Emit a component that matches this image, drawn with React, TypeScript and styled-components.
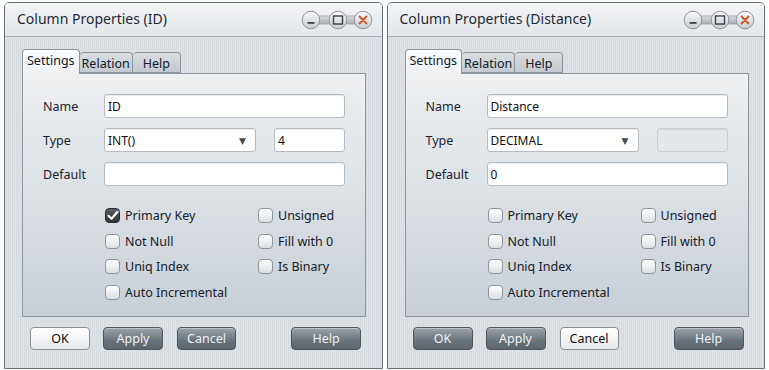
import React from "react";
import styled, { createGlobalStyle } from "styled-components";

const Global = createGlobalStyle`
  html, body { margin: 0; padding: 0; background: #ffffff; }
  body { font-family: "Noto Sans", "Open Sans", "DejaVu Sans", sans-serif; }
  * { box-sizing: border-box; }
`;

const Page = styled.div`
  display: flex;
  gap: 4px;
  padding: 2px 4px 0 4px;
`;

const Win = styled.div`
  width: 379px;
  height: 367px;
  border: 1px solid #66707b;
  border-radius: 5px 5px 0 0;
  display: flex;
  flex-direction: column;
  background: repeating-linear-gradient(90deg, #dfe3e7 0px, #dfe3e7 1px, #d5dadf 1px, #d5dadf 2px);
  overflow: hidden;
`;

const TitleBar = styled.div`
  height: 34px;
  flex: none;
  display: flex;
  align-items: center;
  justify-content: space-between;
  padding: 0 9px 0 12px;
  background: linear-gradient(#f3f5f7, #e2e6ea);
  border-bottom: 1px solid #a7aeb6;
`;

const Title = styled.div`
  font-size: 14px;
  color: #1e2a36;
  padding-bottom: 2px;
`;

const Body = styled.div`
  padding: 12px 16px 0 17px;
  display: flex;
  flex-direction: column;
`;

const TabRow = styled.div`
  display: flex;
  align-items: flex-end;
  height: 24px;
  position: relative;
  z-index: 1;
`;

const Tab = styled.div<{ $active?: boolean; $px: number }>`
  height: ${(p) => (p.$active ? "25px" : "21px")};
  margin-bottom: ${(p) => (p.$active ? "-1px" : "0")};
  padding: 2px ${(p) => p.$px}px 0 ${(p) => p.$px}px;
  border: 1px solid #8d959e;
  border-bottom: ${(p) => (p.$active ? "none" : "1px solid #8d959e")};
  border-left: ${(p) => (p.$active ? "1px solid #8d959e" : "none")};
  border-radius: 4px 4px 0 0;
  background: ${(p) =>
    p.$active ? "linear-gradient(#fbfcfd, #eef0f2)" : "linear-gradient(#d9dde1, #c3c9cf)"};
  font-size: 12.5px;
  color: #14202c;
  line-height: 17px;
`;

const Panel = styled.div`
  width: 344px;
  height: 244px;
  border: 1px solid #8d959e;
  background: linear-gradient(#eef0f2 0%, #dde2e6 45%, #c8cfd7 100%);
  padding: 20px 20px 0 20px;
  display: flex;
  flex-direction: column;
`;

const FieldRow = styled.div`
  display: flex;
  align-items: center;
  height: 24px;
  margin-bottom: 10px;
`;

const Label = styled.div`
  width: 61px;
  font-size: 12.5px;
  color: #1a2430;
`;

const Input = styled.div<{ $w: number; $disabled?: boolean }>`
  width: ${(p) => p.$w}px;
  height: 24px;
  border: 1px solid ${(p) => (p.$disabled ? "#c9ced3" : "#b4bbc3")};
  border-radius: 3px;
  background: ${(p) => (p.$disabled ? "#e4e7ea" : "#ffffff")};
  box-shadow: inset 0 1px 1px rgba(0, 0, 0, 0.08);
  font-size: 12px;
  color: #101010;
  padding: 0 0 0 3px;
  display: flex;
  align-items: center;
  justify-content: space-between;
`;

const Arrow = styled.span`
  font-size: 9px;
  color: #444b52;
  margin-right: 9px;
`;

const Spacer = styled.div<{ $w: number }>`
  width: ${(p) => p.$w}px;
`;

const Checks = styled.div`
  display: grid;
  grid-template-columns: 153px 100px;
  grid-auto-rows: 25.5px;
  margin-left: 62px;
  margin-top: 7px;
`;

const CheckItem = styled.div`
  display: flex;
  align-items: center;
  gap: 5px;
  font-size: 12.5px;
  color: #16202b;
`;

const Box = styled.span<{ $on?: boolean }>`
  width: 15px;
  height: 15px;
  border-radius: 4px;
  border: 1px solid ${(p) => (p.$on ? "#2c3035" : "#8f969d")};
  background: ${(p) =>
    p.$on ? "linear-gradient(#5a5f66, #2d3237)" : "linear-gradient(#ffffff, #dadee2)"};
  display: flex;
  align-items: center;
  justify-content: center;
`;

const ButtonRow = styled.div`
  display: flex;
  padding: 10px 0 0 8px;
`;

const Btn = styled.div<{ $light?: boolean; $w: number; $ml: number }>`
  width: ${(p) => p.$w}px;
  margin-left: ${(p) => p.$ml}px;
  height: 23px;
  border-radius: 4px;
  border: 1px solid ${(p) => (p.$light ? "#8a9199" : "#4f575f")};
  background: ${(p) =>
    p.$light ? "linear-gradient(#ffffff, #e6e8ea)" : "linear-gradient(#9ca3ab, #6a727b 60%, #5c646d)"};
  color: ${(p) => (p.$light ? "#111" : "#eef3f8")};
  font-size: 12.5px;
  display: flex;
  align-items: center;
  justify-content: center;
  box-shadow: inset 0 1px 0 rgba(255, 255, 255, 0.35);
`;

const WinButtons = () => (
  <svg width="72" height="22" viewBox="0 0 72 22">
    <defs>
      <linearGradient id="wb" x1="0" y1="0" x2="0" y2="1">
        <stop offset="0" stopColor="#fafbfc" />
        <stop offset="1" stopColor="#c7ccd1" />
      </linearGradient>
      <linearGradient id="wbar" x1="0" y1="0" x2="0" y2="1">
        <stop offset="0" stopColor="#d8dce0" />
        <stop offset="1" stopColor="#a9b0b7" />
      </linearGradient>
    </defs>
    <rect x="10" y="7" width="52" height="8" fill="url(#wbar)" stroke="#9aa1a8" strokeWidth="0.8" />
    {[10, 37, 62].map((cx) => (
      <circle key={cx} cx={cx} cy="11" r="8.8" fill="url(#wb)" stroke="#8d949b" strokeWidth="1" />
    ))}
    <rect x="6.5" y="13" width="7" height="1.8" fill="#3a4047" />
    <rect x="32.5" y="7" width="9" height="8" fill="none" stroke="#3a4047" strokeWidth="1.4" />
    <path d="M58.5 7.5 L65.5 14.5 M65.5 7.5 L58.5 14.5" stroke="#d4521e" strokeWidth="1.8" strokeLinecap="round" />
  </svg>
);

const Tick = () => (
  <svg width="12" height="11" viewBox="0 0 12 11">
    <path d="M1.5 5.8 L4.6 8.8 L10.5 1.8" fill="none" stroke="#ffffff" strokeWidth="2.2" strokeLinecap="round" strokeLinejoin="round" />
  </svg>
);

type Props = {
  title: string;
  name: string;
  type: string;
  size: string;
  sizeDisabled?: boolean;
  def: string;
  primary?: boolean;
  lightBtn: "ok" | "cancel";
};

const Dialog = ({ title, name, type, size, sizeDisabled, def, primary, lightBtn }: Props) => {
  const checks: [string, boolean][] = [
    ["Primary Key", !!primary],
    ["Unsigned", false],
    ["Not Null", false],
    ["Fill with 0", false],
    ["Uniq Index", false],
    ["Is Binary", false],
    ["Auto Incremental", false],
  ];
  return (
    <Win>
      <TitleBar>
        <Title>{title}</Title>
        <WinButtons />
      </TitleBar>
      <Body>
        <TabRow>
          <Tab $active $px={4}>Settings</Tab>
          <Tab $px={2}>Relation</Tab>
          <Tab $px={10}>Help</Tab>
        </TabRow>
        <Panel>
          <FieldRow>
            <Label>Name</Label>
            <Input $w={241}>{name}</Input>
          </FieldRow>
          <FieldRow>
            <Label>Type</Label>
            <Input $w={152}>
              {type}
              <Arrow>▼</Arrow>
            </Input>
            <Spacer $w={18} />
            <Input $w={71} $disabled={sizeDisabled}>{size}</Input>
          </FieldRow>
          <FieldRow>
            <Label>Default</Label>
            <Input $w={241}>{def}</Input>
          </FieldRow>
          <Checks>
            {checks.map(([label, on]) => (
              <CheckItem key={label}>
                <Box $on={on}>{on && <Tick />}</Box>
                {label}
              </CheckItem>
            ))}
          </Checks>
        </Panel>
        <ButtonRow>
          <Btn $w={60} $ml={0} $light={lightBtn === "ok"}>OK</Btn>
          <Btn $w={60} $ml={13}>Apply</Btn>
          <Btn $w={59} $ml={14} $light={lightBtn === "cancel"}>Cancel</Btn>
          <Btn $w={70} $ml={55}>Help</Btn>
        </ButtonRow>
      </Body>
    </Win>
  );
};

export default function App() {
  return (
    <>
      <Global />
      <Page>
        <Dialog
          title="Column Properties (ID)"
          name="ID"
          type="INT()"
          size="4"
          def=""
          primary
          lightBtn="ok"
        />
        <Dialog
          title="Column Properties (Distance)"
          name="Distance"
          type="DECIMAL"
          size=""
          sizeDisabled
          def="0"
          lightBtn="cancel"
        />
      </Page>
    </>
  );
}
